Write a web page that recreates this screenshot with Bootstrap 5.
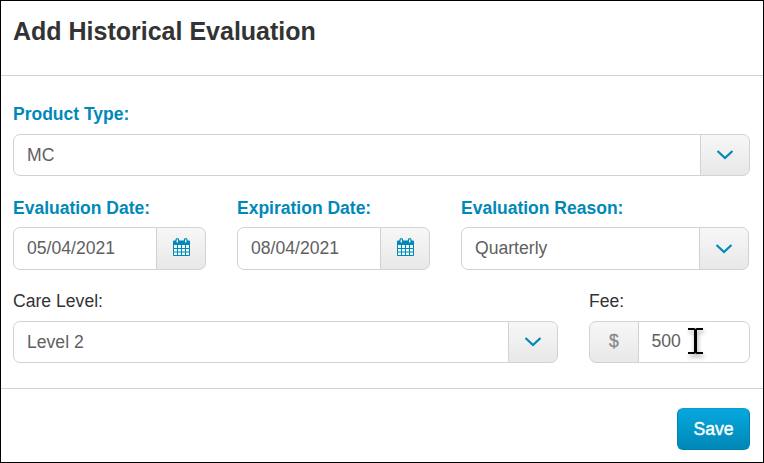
<!DOCTYPE html>
<html lang="en">
<head>
<meta charset="utf-8">
<meta name="viewport" content="width=device-width, initial-scale=1">
<title>Add Historical Evaluation</title>
<link rel="stylesheet" href="https://cdn.jsdelivr.net/npm/bootstrap@5.3.0/dist/css/bootstrap.min.css">
<style>
body{font-family:"Liberation Sans",Arial,sans-serif;background:#fff;color:#333}
.dialog{height:463px;border:1px solid #000}
.dialog-head{height:75px;padding:13px 12px 0;border-bottom:1px solid #d2d2d2}
.dialog-title{font-size:25px;line-height:34px;color:#333}
.dialog-body{padding:26px 13px 25px 12px}
.dialog-foot{padding:19px 13px 0 0;border-top:1px solid #d2d2d2}
.field-label{display:block;font-size:17.6px;line-height:24px;margin-bottom:8px;color:#333}
.field-label.required{font-weight:700;font-size:17.5px;color:#0089b8}
.date-row{margin-top:20px}
.date-row .field-label{margin-bottom:7px}
.fee-row{margin-top:19px}
.field{height:42px}
.field.tall{height:43px}
.field .form-control{border:1px solid #d2d2d2;border-radius:7px;padding:0 13px;height:100%;font-size:17.6px;line-height:40px;color:#5f5f5f;background:#fff;text-align:left}
.field #fee{padding:0 12.5px 2px}
.field .addon{width:50px;padding:0;border:1px solid #d2d2d2;border-radius:7px;background:linear-gradient(#f7f7f7,#e8e8e8);display:flex;align-items:center;justify-content:center;color:#888;font-size:17.6px}
.field .currency{-webkit-text-stroke:.3px #888;padding-bottom:2px}
.field svg{display:block}
.w-date{width:193px}
.w-reason{width:288px;margin-right:1px}
.w-level{width:545px}
.w-fee{width:161px}
.btn-save{width:73px;height:42px;padding:0;border:1px solid #0083b2;border-top-color:#0c9bd0;border-radius:6px;background:linear-gradient(#06a8df,#0087b6);color:#fff;font-size:17.6px;-webkit-text-stroke:.4px #fff}
.text-cursor{position:absolute;left:97px;top:3px;z-index:6;filter:drop-shadow(1px 3px 2px rgba(0,0,0,.35));pointer-events:none}
</style>
</head>
<body>
<svg class="d-none">
  <symbol id="chevron" viewBox="0 0 18 10"><path d="M1.500 1l7.500 7 7.500-7" fill="none" stroke="#0089b8" stroke-width="2.200"/></symbol>
  <symbol id="calendar" viewBox="0 0 17 18">
    <rect y="2.500" width="17" height="15.500" rx=".8" fill="#0089b8"/>
    <path d="M1 7h3v3H1zm4 0h3v3H5zm4 0h3v3H9zm4 0h3v3h-3zM1 11h3v2.500H1zm4 0h3v2.500H5zm4 0h3v2.500H9zm4 0h3v2.500h-3zM1 14.500h3V17H1zm4 0h3V17H5zm4 0h3V17H9zm4 0h3V17h-3z" fill="#f4f7f8"/>
    <rect x="3" y=".6" width="2.600" height="4.600" rx="1.300" fill="#f4f7f8" stroke="#0089b8" stroke-width="1.200"/>
    <rect x="11.400" y=".6" width="2.600" height="4.600" rx="1.300" fill="#f4f7f8" stroke="#0089b8" stroke-width="1.200"/>
  </symbol>
</svg>
<div class="dialog d-flex flex-column">
  <header class="dialog-head"><h1 class="dialog-title fw-bold m-0">Add Historical Evaluation</h1></header>
  <main class="dialog-body">
    <div>
      <label class="field-label required">Product Type:</label>
      <div class="input-group field"><div class="form-control">MC</div><button class="btn addon" type="button" aria-label="Open"><svg width="18" height="10"><use href="#chevron"/></svg></button></div>
    </div>
    <div class="d-flex justify-content-between date-row">
      <div class="w-date">
        <label class="field-label required" for="evalDate">Evaluation Date:</label>
        <div class="input-group field tall"><input id="evalDate" class="form-control" value="05/04/2021"><button class="btn addon" type="button" aria-label="Pick date"><svg width="17" height="18" class="mb-1"><use href="#calendar"/></svg></button></div>
      </div>
      <div class="w-date">
        <label class="field-label required" for="expDate">Expiration Date:</label>
        <div class="input-group field tall"><input id="expDate" class="form-control" value="08/04/2021"><button class="btn addon" type="button" aria-label="Pick date"><svg width="17" height="18" class="mb-1"><use href="#calendar"/></svg></button></div>
      </div>
      <div class="w-reason">
        <label class="field-label required">Evaluation Reason:</label>
        <div class="input-group field tall"><div class="form-control">Quarterly</div><button class="btn addon" type="button" aria-label="Open"><svg width="18" height="10"><use href="#chevron"/></svg></button></div>
      </div>
    </div>
    <div class="d-flex justify-content-between fee-row">
      <div class="w-level">
        <label class="field-label">Care Level:</label>
        <div class="input-group field"><div class="form-control">Level 2</div><button class="btn addon" type="button" aria-label="Open"><svg width="18" height="10"><use href="#chevron"/></svg></button></div>
      </div>
      <div class="w-fee">
        <label class="field-label" for="fee">Fee:</label>
        <div class="position-relative">
          <div class="input-group field"><span class="input-group-text addon currency">$</span><input id="fee" class="form-control" value="500"></div>
          <svg class="text-cursor" width="19" height="32" viewBox="0 0 19 32"><path d="M2 5h6l1.500 1L11 5h6M2 29h6l1.500-1 1.500 1h6" fill="none" stroke="#000" stroke-width="2"/><path d="M9.500 5v24" stroke="#000" stroke-width="3"/></svg>
        </div>
      </div>
    </div>
  </main>
  <footer class="dialog-foot d-flex justify-content-end"><button class="btn btn-save" type="button">Save</button></footer>
</div>
<script src="https://cdn.jsdelivr.net/npm/bootstrap@5.3.0/dist/js/bootstrap.bundle.min.js"></script>
</body>
</html>
